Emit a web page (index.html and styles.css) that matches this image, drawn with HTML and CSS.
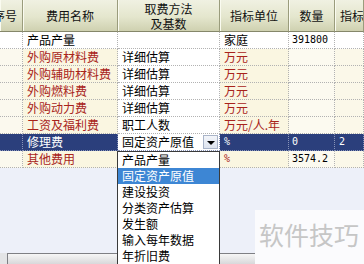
FILE: index.html
```html
<!DOCTYPE html>
<html>
<head>
<meta charset="utf-8">
<link rel="stylesheet" href="styles.css">
</head>
<body>
<div class="sheet">
    <div class="head">
        <div class="hd hd-cut">序号</div>
        <div class="hd">费用名称</div>
        <div class="hd hd-two">取费方法<br>及基数</div>
        <div class="hd">指标单位</div>
        <div class="hd">数量</div>
        <div class="hd hd-cut-r">指标单位</div>
    </div>
    <div class="row first">
        <div class="c idx"></div>
        <div class="c name">产品产量</div>
        <div class="c way"></div>
        <div class="c unit">家庭</div>
        <div class="c qty num">391800</div>
        <div class="c last"></div>
    </div>
    <div class="row">
        <div class="c idx"></div>
        <div class="c name red">外购原材料费</div>
        <div class="c way">详细估算</div>
        <div class="c unit red">万元</div>
        <div class="c qty"></div>
        <div class="c last"></div>
    </div>
    <div class="row">
        <div class="c idx"></div>
        <div class="c name red">外购辅助材料费</div>
        <div class="c way">详细估算</div>
        <div class="c unit red">万元</div>
        <div class="c qty"></div>
        <div class="c last"></div>
    </div>
    <div class="row">
        <div class="c idx"></div>
        <div class="c name red">外购燃料费</div>
        <div class="c way">详细估算</div>
        <div class="c unit red">万元</div>
        <div class="c qty"></div>
        <div class="c last"></div>
    </div>
    <div class="row">
        <div class="c idx"></div>
        <div class="c name red">外购动力费</div>
        <div class="c way">详细估算</div>
        <div class="c unit red">万元</div>
        <div class="c qty"></div>
        <div class="c last"></div>
    </div>
    <div class="row">
        <div class="c idx"></div>
        <div class="c name red">工资及福利费</div>
        <div class="c way">职工人数</div>
        <div class="c unit red">万元/人.年</div>
        <div class="c qty"></div>
        <div class="c last"></div>
    </div>
    <div class="row selected">
        <div class="c idx"></div>
        <div class="c name">修理费</div>
        <div class="c way combo">
            <span class="combo-text">固定资产原值</span>
            <span class="combo-btn"></span>
        </div>
        <div class="c unit num">%</div>
        <div class="c qty num">0</div>
        <div class="c last num">2</div>
    </div>
    <div class="row">
        <div class="c idx"></div>
        <div class="c name red">其他费用</div>
        <div class="c way"></div>
        <div class="c unit red num">%</div>
        <div class="c qty num">3574.2</div>
        <div class="c last"></div>
    </div>
    <div class="empty"></div>
    <div class="hscroll"><div class="hscroll-bar"></div></div>

    <ul class="droplist">
        <li>产品产量</li>
        <li class="on">固定资产原值</li>
        <li>建设投资</li>
        <li>分类资产估算</li>
        <li>发生额</li>
        <li>输入每年数据</li>
        <li>年折旧费</li>
    </ul>
    <div class="mark">软件技巧</div>
</div>
</body>
</html>
```

FILE: styles.css
```css
body { margin: 0; font: 12px/16px "Noto Sans CJK SC", sans-serif; color: #000; background: #edf0f9; }
.sheet { position: relative; width: 364px; height: 264px; overflow: hidden; display: flex; flex-direction: column; }

.head, .row { display: grid; grid-template-columns: 23px 95px 102px 69px 46px 29px; flex-shrink: 0; }
.head { height: 32px; }
.hd {
    box-sizing: border-box;
    display: flex;
    align-items: center;
    justify-content: center;
    text-align: center;
    line-height: 14px;
    white-space: nowrap;
    overflow: hidden;
    color: #111;
    background: linear-gradient(to bottom, #f0f1e2 0%, #e4e6cd 55%, #cfd1b0 100%);
    border-right: 1px solid #9a9c7c;
    border-bottom: 1px solid #85876a;
    box-shadow: inset 1px 0 0 #fafbf0;
}
.hd-two { line-height: 15px; }
.hd-cut { justify-content: flex-end; padding-right: 5px; }
.hd-cut-r { justify-content: flex-start; padding-left: 5px; }

.c {
    box-sizing: border-box;
    height: 17px;
    padding-left: 4px;
    white-space: nowrap;
    overflow: hidden;
    border-right: 1px dotted #b2b2b2;
    border-bottom: 1px dotted #b2b2b2;
}
.idx { background: #fbf9ee; }
.name, .unit { background: #faf6e1; }
.way { background: #fff; }
.qty { background: #fcfaf0; padding-left: 3px; }
.last { background: #fbf8e9; }
.first .c { background: #fff; }
.red { color: #a8231a; }
.num { font-family: "DejaVu Sans Mono", monospace; font-size: 10px; line-height: 16px; }

.selected .c { background: #2b3f7c; color: #fff; border-color: #8894b8; }
.selected .combo { display: flex; padding: 0; background: #fff; color: #000; }
.combo-text { flex: 1; padding-left: 4px; }
.combo-btn {
    position: relative;
    width: 13px;
    margin: 1px 1px 1px 0;
    background: linear-gradient(#f3f5fa, #dde3ee);
    border: 1px solid #a9b4c8;
}
.combo-btn:after {
    content: "";
    position: absolute;
    left: 3px;
    top: 5px;
    border-left: 4px solid transparent;
    border-right: 4px solid transparent;
    border-top: 4px solid #000;
}

.empty { flex: 1; }
.hscroll { height: 11px; background: #e3e4e6; flex-shrink: 0; }
.hscroll-bar {
    height: 100%;
    margin-left: 7px;
    box-sizing: border-box;
    border-top: 1px solid #7e7f84;
    border-left: 1px solid #7e7f84;
    background: linear-gradient(#f6f6f6, #d8d8da);
}

.droplist {
    position: absolute;
    left: 117px;
    top: 151px;
    width: 103px;
    box-sizing: border-box;
    margin: 0;
    padding: 0;
    list-style: none;
    background: #fff;
    border: 1px solid #3a3a3a;
}
.droplist li { height: 16px; line-height: 16px; padding-left: 4px; white-space: nowrap; overflow: hidden; }
.droplist .on { background: #3d86d4; color: #fff; }

.mark {
    position: absolute;
    left: 255px;
    top: 210px;
    right: 0;
    bottom: 0;
    padding: 12px 0 0 4px;
    background: #fbfbfd;
    color: #c6c6c6;
    font-size: 25px;
    line-height: 25px;
    white-space: nowrap;
}
```
